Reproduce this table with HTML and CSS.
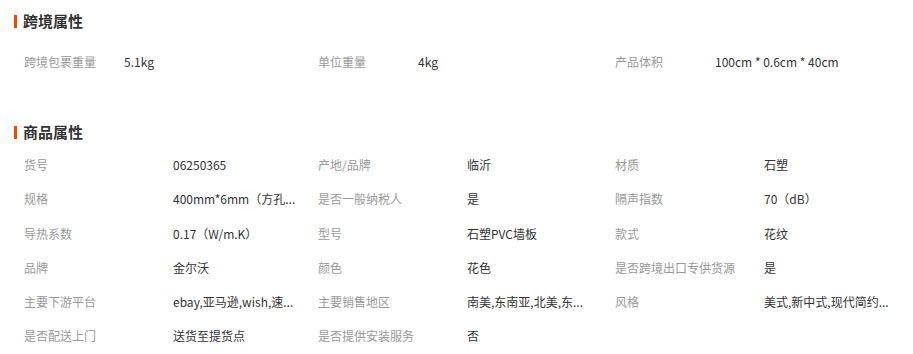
FILE: index.html
```html
<!DOCTYPE html>
<html lang="zh-CN">
<head>
<meta charset="utf-8">
<link rel="stylesheet" href="styles.css">
</head>
<body>
<div class="page">
  <section class="sec sec-cross">
    <h3 class="sec-title">跨境属性</h3>
    <div class="grid">
      <div class="item"><span class="label">跨境包裹重量</span><span class="value">5.1kg</span></div>
      <div class="item"><span class="label">单位重量</span><span class="value">4kg</span></div>
      <div class="item"><span class="label">产品体积</span><span class="value">100cm * 0.6cm * 40cm</span></div>
    </div>
  </section>
  <section class="sec sec-goods">
    <h3 class="sec-title">商品属性</h3>
    <div class="grid">
      <div class="item"><span class="label">货号</span><span class="value">06250365</span></div>
      <div class="item"><span class="label">产地/品牌</span><span class="value">临沂</span></div>
      <div class="item"><span class="label">材质</span><span class="value">石塑</span></div>
      <div class="item"><span class="label">规格</span><span class="value">400mm*6mm（方孔...</span></div>
      <div class="item"><span class="label">是否一般纳税人</span><span class="value">是</span></div>
      <div class="item"><span class="label">隔声指数</span><span class="value">70（dB）</span></div>
      <div class="item"><span class="label">导热系数</span><span class="value">0.17（W/m.K）</span></div>
      <div class="item"><span class="label">型号</span><span class="value">石塑PVC墙板</span></div>
      <div class="item"><span class="label">款式</span><span class="value">花纹</span></div>
      <div class="item"><span class="label">品牌</span><span class="value">金尔沃</span></div>
      <div class="item"><span class="label">颜色</span><span class="value">花色</span></div>
      <div class="item"><span class="label">是否跨境出口专供货源</span><span class="value">是</span></div>
      <div class="item"><span class="label">主要下游平台</span><span class="value">ebay,亚马逊,wish,速...</span></div>
      <div class="item"><span class="label">主要销售地区</span><span class="value">南美,东南亚,北美,东...</span></div>
      <div class="item"><span class="label">风格</span><span class="value">美式,新中式,现代简约...</span></div>
      <div class="item"><span class="label">是否配送上门</span><span class="value">送货至提货点</span></div>
      <div class="item"><span class="label">是否提供安装服务</span><span class="value">否</span></div>
    </div>
  </section>
</div>
</body>
</html>
```
FILE: styles.css
```css
* { box-sizing: border-box; }
html, body { margin: 0; padding: 0; background: #fff; }
body {
  font-family: "Noto Sans CJK SC", "Microsoft YaHei", "Liberation Sans", sans-serif;
  font-size: 12px;
  color: #333;
}
.page { width: 913px; padding-top: 11px; }
.sec-title {
  margin: 0 0 0 14px;
  height: 20px;
  line-height: 20px;
  font-size: 15px;
  font-weight: bold;
  color: #333;
  display: flex;
  align-items: center;
  gap: 6px;
}
.sec-title::before {
  content: "";
  width: 3px;
  height: 13px;
  background: #ff4400;
}
.grid {
  display: grid;
  grid-template-columns: 294px 297px 1fr;
  padding-left: 24px;
}
.sec-cross .grid { margin-top: 14px; }
.sec-goods { margin-top: 43px; }
.sec-goods .grid { margin-top: 6px; }
.item {
  display: flex;
  height: 34.2px;
  line-height: 34px;
  white-space: nowrap;
}
.label { color: #999; flex: none; }
.sec-cross .label { width: 100px; }
.sec-goods .label { width: 149px; }
.value { color: #333; }
```
